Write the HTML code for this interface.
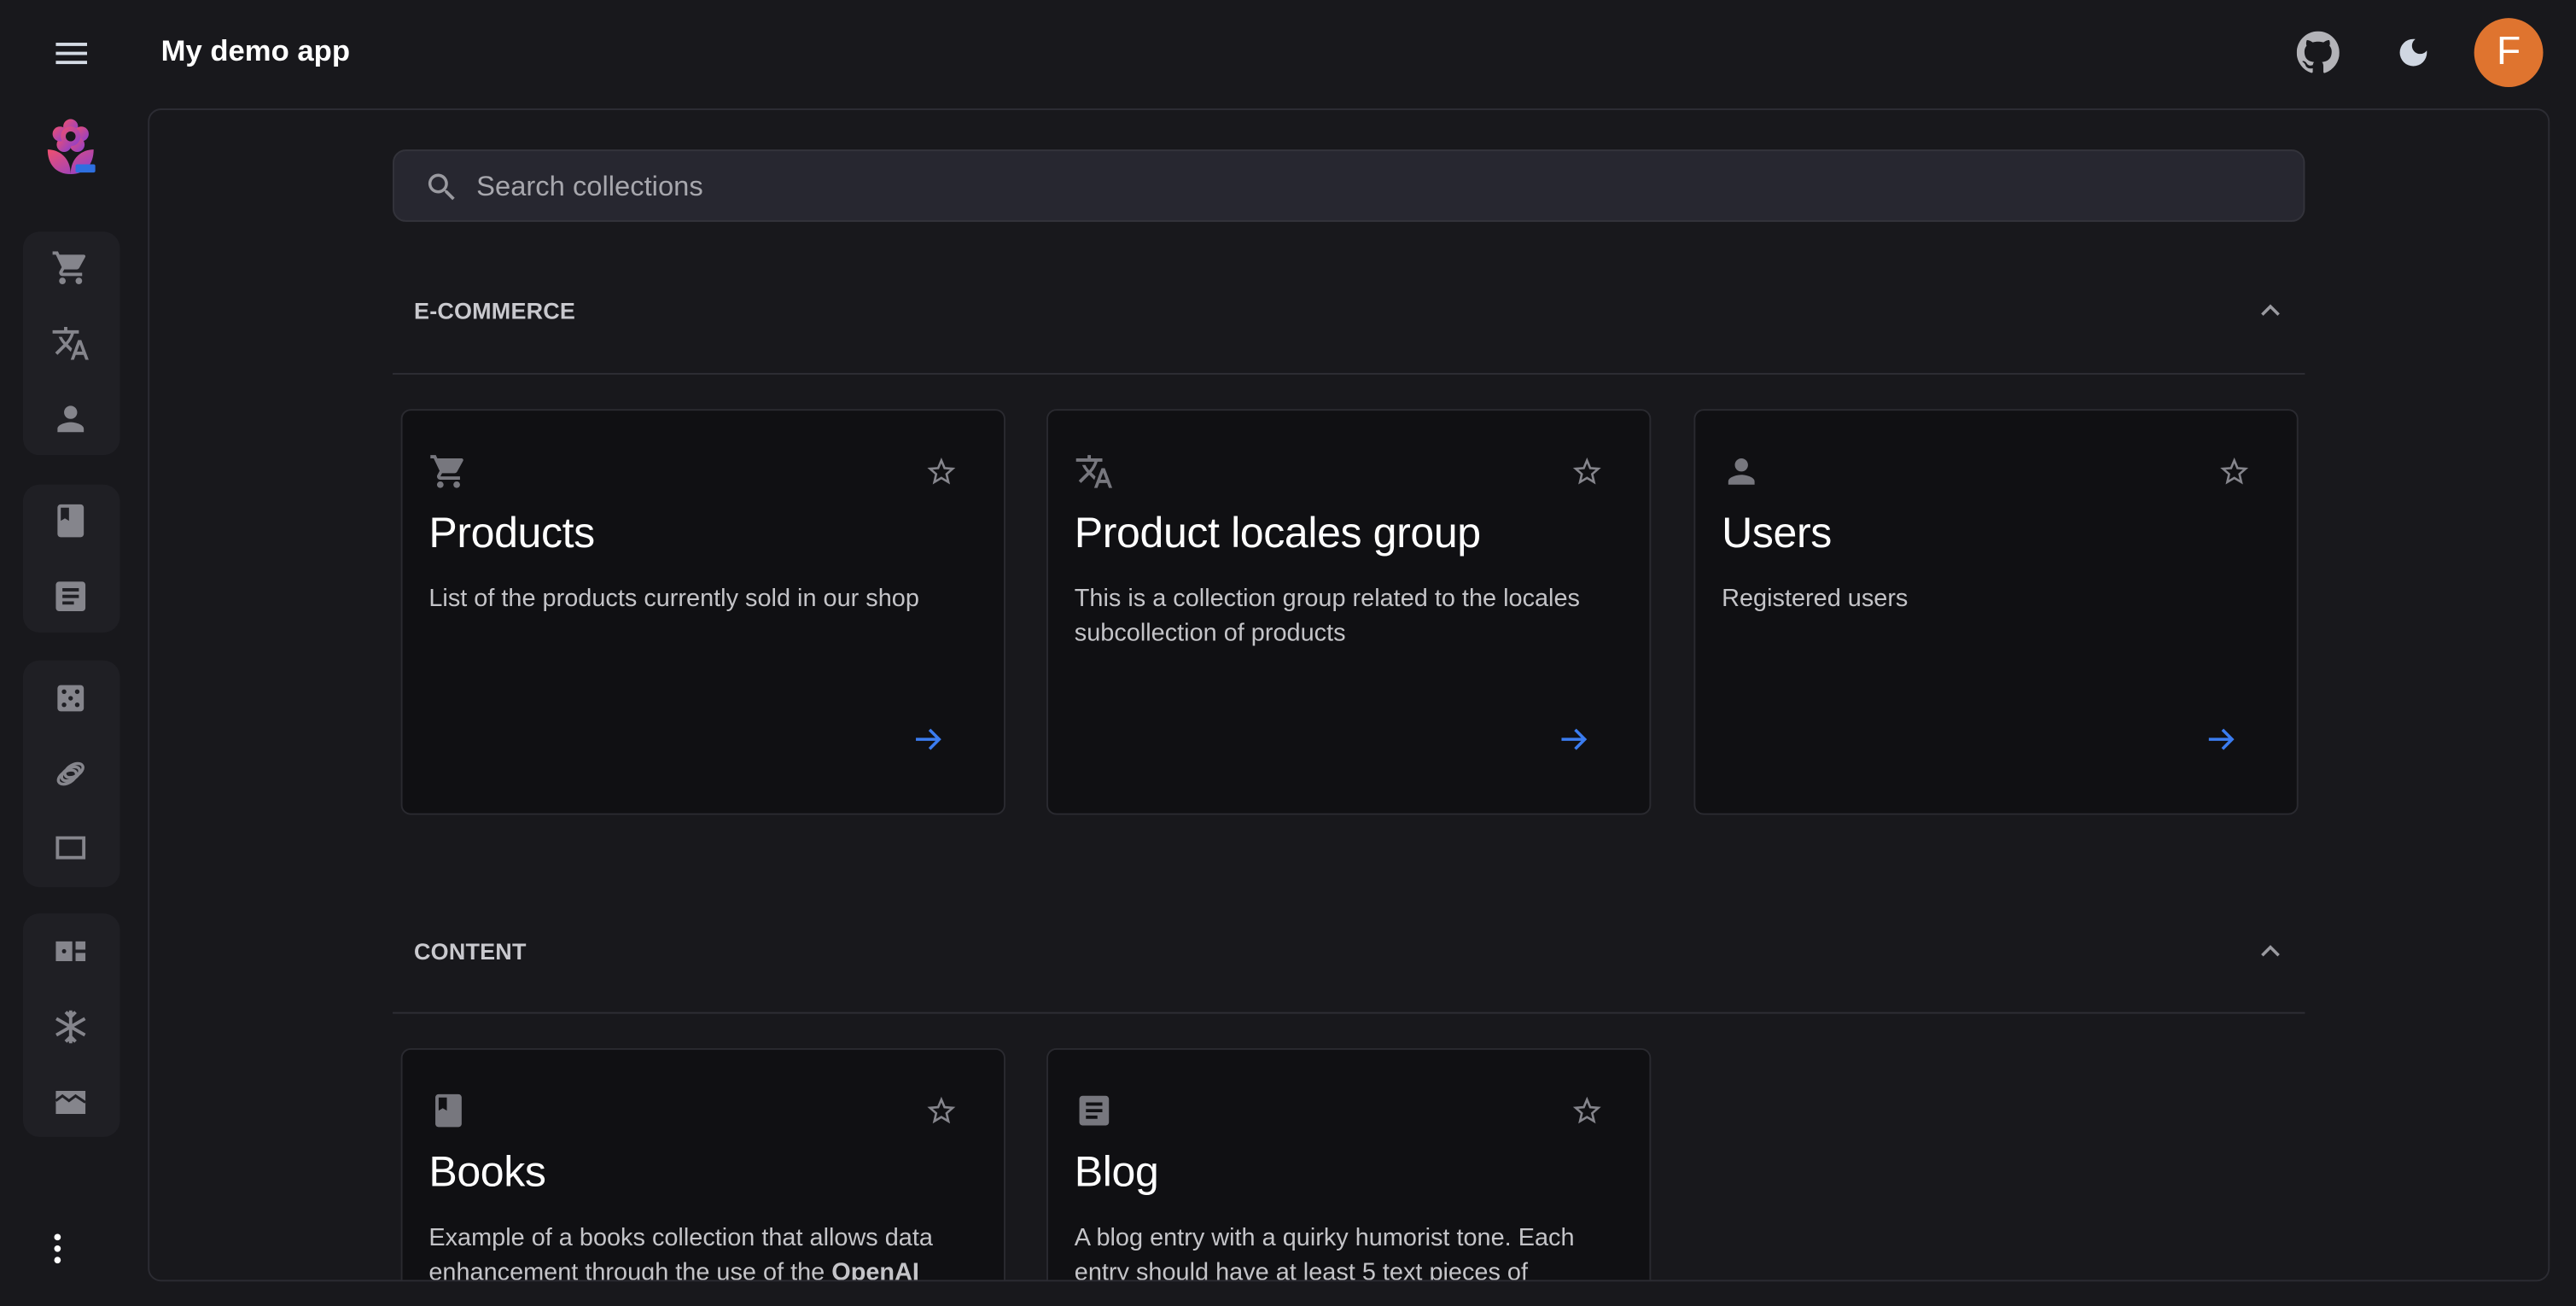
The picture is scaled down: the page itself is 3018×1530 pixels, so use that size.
<!DOCTYPE html>
<html><head><meta charset="utf-8"><style>
*{box-sizing:border-box;margin:0;padding:0}
html,body{width:3018px;height:1530px;overflow:hidden;background:#18181c}
#w{position:absolute;left:0;top:0;width:1568px;height:795px;overflow:hidden;transform:scale(1.92474);transform-origin:0 0;font-family:"Liberation Sans",sans-serif;color:#fff}
.a{position:absolute}
.grp{position:absolute;left:14px;width:59px;background:#1f1f24;border-radius:10px}
.ic{position:absolute;left:31px;width:24px;height:24px;fill:#85858c}
.panel{position:absolute;left:90px;top:66px;width:1462px;height:714px;border:1px solid #2c2c33;border-radius:8px;overflow:hidden}
.search{position:absolute;left:148px;top:24px;width:1164px;height:44px;background:#272730;border:1px solid #33333b;border-radius:8px}
.sec{position:absolute;left:161px;font-size:14px;font-weight:bold;color:#c9c9ce;letter-spacing:.1px}
.div{position:absolute;left:148px;width:1164px;height:1px;background:#2e2e35}
.chev{position:absolute;left:1281px;width:20px;height:20px}
.card{position:absolute;width:368px;height:247px;background:#101013;border:1px solid #2a2a30;border-radius:6px}
.card .t{position:absolute;left:16px;top:59px;font-size:26px;color:#fff;letter-spacing:-.2px}
.card .d{position:absolute;left:16px;top:104px;width:318px;font-size:15px;line-height:21px;color:#c4c4c8}
.card svg.ci{position:absolute;left:16px;top:25px;width:24px;height:24px;fill:#77777e}
.card svg.st{position:absolute;left:319px;top:28px;width:18px;height:18px}
.card svg.ar{position:absolute;left:310px;top:190px;width:20px;height:20px}
</style></head><body><div id="w">
<svg class="a" style="left:33px;top:22px" width="21" height="20" viewBox="0 0 21 20"><rect x="1" y="4" width="19" height="2" fill="#d4dae4"/><rect x="1" y="9.5" width="19" height="2" fill="#d4dae4"/><rect x="1" y="15" width="19" height="2" fill="#d4dae4"/></svg>
<div class="a" style="left:98px;top:21px;font-size:18px;font-weight:bold">My demo app</div>
<svg class="a" style="left:1398px;top:19px" width="26" height="26" viewBox="0 0 16 16"><path fill="#b3b3b8" d="M8 0C3.58 0 0 3.58 0 8c0 3.54 2.29 6.530 5.47 7.59.4.07.55-.17.55-.38v-1.33c-2.230.48-2.7-1.07-2.7-1.07-.36-.92-.89-1.17-.89-1.17-.73-.5.05-.49.05-.49.8.06 1.23.82 1.23.82.72 1.23 1.88.87 2.33.67.07-.52.28-.87.5-1.07-1.78-.2-3.64-.89-3.64-3.95 0-.87.31-1.59.82-2.15-.08-.2-.36-1.02.08-2.12 0 0 .67-.21 2.2.82.64-.18 1.32-.27 2-.27.68 0 1.36.09 2 .27 1.53-1.04 2.2-.82 2.2-.82.44 1.1.16 1.92.08 2.12.51.56.82 1.27.82 2.15 0 3.07-1.87 3.75-3.65 3.95.29.25.54.73.54 1.48v2.2c0 .21.15.46.55.38A8.013 8.013 0 0016 8c0-4.42-3.58-8-8-8z"/></svg>
<svg class="a" style="left:1458px;top:21px" width="22" height="22" viewBox="0 0 24 24"><path fill="#d0d7e2" d="M12 3a9 9 0 109 9c0-.46-.04-.92-.1-1.36a5.39 5.39 0 01-4.4 2.26 5.4 5.4 0 01-3.14-9.8c-.44-.06-.9-.1-1.36-.1z"/></svg>
<div class="a" style="left:1506px;top:11px;width:42px;height:42px;border-radius:50%;background:#df742f;color:#fff;font-size:24px;text-align:center;line-height:42px">F</div>
<svg class="a" style="left:28px;top:72px" width="32" height="36" viewBox="0 0 32 36"><defs><linearGradient id="g" x1="0" y1="0" x2="1" y2="1"><stop offset="0" stop-color="#f0506e"/><stop offset="1" stop-color="#8a3fd0"/></linearGradient></defs><g fill="url(#g)"><circle cx="15" cy="5" r="4.5"/><circle cx="21.5" cy="9.5" r="4.5"/><circle cx="19" cy="16" r="4.5"/><circle cx="11" cy="16" r="4.5"/><circle cx="8.5" cy="9.5" r="4.5"/><circle cx="15" cy="11" r="6"/><path d="M1 19c7 0 14 5 14 15C6 34 1 28 1 19zM29 19c0 9-5 15-14 15 0-10 7-15 14-15z"/></g><circle cx="15" cy="11" r="3" fill="#18181c"/><rect x="18" y="28" width="12" height="5" rx="1" fill="#2e6fe0"/></svg>
<div class="grp" style="top:141px;height:136px"></div>
<div class="grp" style="top:295px;height:90px"></div>
<div class="grp" style="top:402px;height:138px"></div>
<div class="grp" style="top:556px;height:136px"></div>
<svg class="ic" style="top:151px" viewBox="0 0 24 24"><path d="M7 18c-1.1 0-2 .9-2 2s.9 2 2 2 2-.9 2-2-.9-2-2-2zM1 2v2h2l3.6 7.590-1.35 2.45c-.16.28-.25.61-.25.96 0 1.1.9 2 2 2h12v-2H7.42c-.14 0-.25-.11-.25-.25l.03-.12.9-1.63h7.45c.75 0 1.41-.41 1.75-1.030l3.58-6.49A1 1 0 0020 4H5.21l-.94-2H1zm16 16c-1.1 0-2 .9-2 2s.9 2 2 2 2-.9 2-2-.9-2-2-2z"/></svg>
<svg class="ic" style="top:197px" viewBox="0 0 24 24"><path d="M12.87 15.07l-2.54-2.51.03-.03A17.52 17.52 0 0014.07 6H17V4h-7V2H8v2H1v2h11.17C11.5 7.92 10.44 9.75 9 11.35 8.07 10.32 7.3 9.19 6.69 8h-2c.73 1.63 1.73 3.17 2.98 4.56l-5.09 5.02L4 19l5-5 3.11 3.11.76-2.04zM18.5 10h-2L12 22h2l1.12-3h4.75L21 22h2l-4.5-12zm-2.62 7l1.62-4.33L19.12 17h-3.24z"/></svg>
<svg class="ic" style="top:243px" viewBox="0 0 24 24"><path d="M12 12c2.21 0 4-1.79 4-4s-1.79-4-4-4-4 1.79-4 4 1.79 4 4 4zm0 2c-2.67 0-8 1.34-8 4v2h16v-2c0-2.66-5.33-4-8-4z"/></svg>
<svg class="ic" style="top:305px" viewBox="0 0 24 24"><path d="M18 2H6c-1.1 0-2 .9-2 2v16c0 1.1.9 2 2 2h12c1.1 0 2-.9 2-2V4c0-1.1-.9-2-2-2zM6 4h5v8l-2.5-1.5L6 12V4z"/></svg>
<svg class="ic" style="top:351px" viewBox="0 0 24 24"><path d="M19 3H5c-1.1 0-2 .9-2 2v14c0 1.1.9 2 2 2h14c1.1 0 2-.9 2-2V5c0-1.1-.9-2-2-2zm-5 14H7v-2h7v2zm3-4H7v-2h10v2zm0-4H7V7h10v2z"/></svg>
<svg class="ic" style="top:413px" viewBox="0 0 24 24"><rect x="4" y="4" width="16" height="16" rx="2"/><g fill="#1f1f24"><circle cx="8" cy="8" r="1.4"/><circle cx="16" cy="8" r="1.4"/><circle cx="12" cy="12" r="1.4"/><circle cx="8" cy="16" r="1.4"/><circle cx="16" cy="16" r="1.4"/></g></svg>
<svg class="ic" style="top:459px" viewBox="0 0 24 24"><g fill="none" stroke="#85858c" stroke-width="1.8"><ellipse cx="10" cy="14" rx="6" ry="3.5" transform="rotate(-30 10 14)"/><ellipse cx="12" cy="12" rx="6" ry="3.5" transform="rotate(-30 12 12)"/><ellipse cx="14" cy="10" rx="6" ry="3.5" transform="rotate(-30 14 10)"/></g></svg>
<svg class="ic" style="top:504px" viewBox="0 0 24 24"><path d="M3 5h18v14H3zM5 7v10h14V7z" fill-rule="evenodd"/></svg>
<svg class="ic" style="top:567px" viewBox="0 0 24 24"><path d="M3 6h10v12H3zM15 6h6v5h-6zM15 13h6v5h-6z"/><circle cx="8" cy="12" r="1.3" fill="#1f1f24"/></svg>
<svg class="ic" style="top:613px" viewBox="0 0 24 24"><g stroke="#85858c" stroke-width="2"><path d="M12 2v20M3.3 7l17.4 10M3.3 17l17.4-10M9 3l3 3 3-3M9 21l3-3 3 3"/></g></svg>
<svg class="ic" style="top:659px" viewBox="0 0 24 24"><path d="M3 5h18v14H3z"/><path d="M3 11l4-3 4 3 4-3 6 4" stroke="#1f1f24" stroke-width="1.6" fill="none"/></svg>
<svg class="a" style="left:31px;top:750px" width="8" height="20" viewBox="0 0 8 20"><circle cx="4" cy="3" r="2" fill="#fff"/><circle cx="4" cy="10" r="2" fill="#fff"/><circle cx="4" cy="17" r="2" fill="#fff"/></svg>

<div class="panel">
<div class="search"><svg class="a" style="left:18px;top:11px" width="22" height="22" viewBox="0 0 24 24"><path fill="#9a9aa0" d="M15.5 14h-.79l-.28-.27A6.47 6.47 0 0016 9.5 6.5 6.5 0 109.5 16c1.61 0 3.09-.59 4.23-1.57l.27.28v.79l5 4.99L20.49 19l-4.99-5zm-6 0C7.01 14 5 11.99 5 9.5S7.01 5 9.5 5 14 7.01 14 9.5 11.99 14 9.5 14z"/></svg><div class="a" style="left:50px;top:12px;font-size:17px;color:#a7a7ad">Search collections</div></div>
<div class="sec" style="top:114px">E-COMMERCE</div>
<svg class="chev" style="top:112px" viewBox="0 0 24 24"><path d="M6 15l6-6 6 6" stroke="#9a9aa0" stroke-width="2.2" fill="none"/></svg>
<div class="div" style="top:160px"></div>
<div class="sec" style="top:504px">CONTENT</div>
<svg class="chev" style="top:502px" viewBox="0 0 24 24"><path d="M6 15l6-6 6 6" stroke="#9a9aa0" stroke-width="2.2" fill="none"/></svg>
<div class="div" style="top:549px"></div>

<div class="card" style="left:153px;top:182px"><svg class="ci" viewBox="0 0 24 24"><path d="M7 18c-1.1 0-2 .9-2 2s.9 2 2 2 2-.9 2-2-.9-2-2-2zM1 2v2h2l3.6 7.59-1.35 2.45c-.16.28-.25.61-.25.96 0 1.1.9 2 2 2h12v-2H7.42c-.14 0-.25-.11-.25-.25l.03-.12.9-1.63h7.45c.75 0 1.41-.41 1.75-1.03l3.58-6.49A1 1 0 0020 4H5.21l-.94-2H1zm16 16c-1.1 0-2 .9-2 2s.9 2 2 2 2-.9 2-2-.9-2-2-2z"/></svg><svg class="st" viewBox="0 0 24 24"><path d="M12 3l2.6 6.2 6.6.5-5 4.4 1.5 6.5L12 17.2 6.3 20.6l1.5-6.5-5-4.4 6.6-.5z" fill="none" stroke="#85858c" stroke-width="1.8"/></svg><div class="t">Products</div><div class="d">List of the products currently sold in our shop</div><svg class="ar" viewBox="0 0 24 24"><path d="M3 12h17M13 5l7 7-7 7" stroke="#3b7cf0" stroke-width="2.2" fill="none"/></svg></div>
<div class="card" style="left:546px;top:182px"><svg class="ci" viewBox="0 0 24 24"><path d="M12.87 15.07l-2.54-2.51.03-.03A17.52 17.52 0 0014.07 6H17V4h-7V2H8v2H1v2h11.17C11.5 7.92 10.44 9.75 9 11.35 8.07 10.32 7.3 9.19 6.69 8h-2c.73 1.63 1.73 3.17 2.98 4.56l-5.09 5.02L4 19l5-5 3.11 3.11.76-2.04zM18.5 10h-2L12 22h2l1.12-3h4.75L21 22h2l-4.5-12zm-2.62 7l1.62-4.33L19.12 17h-3.24z"/></svg><svg class="st" viewBox="0 0 24 24"><path d="M12 3l2.6 6.2 6.6.5-5 4.4 1.5 6.5L12 17.2 6.3 20.6l1.5-6.5-5-4.4 6.6-.5z" fill="none" stroke="#85858c" stroke-width="1.8"/></svg><div class="t">Product locales group</div><div class="d">This is a collection group related to the locales subcollection of products</div><svg class="ar" viewBox="0 0 24 24"><path d="M3 12h17M13 5l7 7-7 7" stroke="#3b7cf0" stroke-width="2.2" fill="none"/></svg></div>
<div class="card" style="left:940px;top:182px"><svg class="ci" viewBox="0 0 24 24"><path d="M12 12c2.21 0 4-1.79 4-4s-1.79-4-4-4-4 1.79-4 4 1.79 4 4 4zm0 2c-2.67 0-8 1.34-8 4v2h16v-2c0-2.66-5.33-4-8-4z"/></svg><svg class="st" viewBox="0 0 24 24"><path d="M12 3l2.6 6.2 6.6.5-5 4.4 1.5 6.5L12 17.2 6.3 20.6l1.5-6.5-5-4.4 6.6-.5z" fill="none" stroke="#85858c" stroke-width="1.8"/></svg><div class="t">Users</div><div class="d">Registered users</div><svg class="ar" viewBox="0 0 24 24"><path d="M3 12h17M13 5l7 7-7 7" stroke="#3b7cf0" stroke-width="2.2" fill="none"/></svg></div>
<div class="card" style="left:153px;top:571px"><svg class="ci" viewBox="0 0 24 24"><path d="M18 2H6c-1.1 0-2 .9-2 2v16c0 1.1.9 2 2 2h12c1.1 0 2-.9 2-2V4c0-1.1-.9-2-2-2zM6 4h5v8l-2.5-1.5L6 12V4z"/></svg><svg class="st" viewBox="0 0 24 24"><path d="M12 3l2.6 6.2 6.6.5-5 4.4 1.5 6.5L12 17.2 6.3 20.6l1.5-6.5-5-4.4 6.6-.5z" fill="none" stroke="#85858c" stroke-width="1.8"/></svg><div class="t">Books</div><div class="d">Example of a books collection that allows data enhancement through the use of the <b>OpenAI</b> plugin</div></div>
<div class="card" style="left:546px;top:571px"><svg class="ci" viewBox="0 0 24 24"><path d="M19 3H5c-1.1 0-2 .9-2 2v14c0 1.1.9 2 2 2h14c1.1 0 2-.9 2-2V5c0-1.1-.9-2-2-2zm-5 14H7v-2h7v2zm3-4H7v-2h10v2zm0-4H7V7h10v2z"/></svg><svg class="st" viewBox="0 0 24 24"><path d="M12 3l2.6 6.2 6.6.5-5 4.4 1.5 6.5L12 17.2 6.3 20.6l1.5-6.5-5-4.4 6.6-.5z" fill="none" stroke="#85858c" stroke-width="1.8"/></svg><div class="t">Blog</div><div class="d">A blog entry with a quirky humorist tone. Each entry should have at least 5 text pieces of content</div></div>
</div>
</div></body></html>
